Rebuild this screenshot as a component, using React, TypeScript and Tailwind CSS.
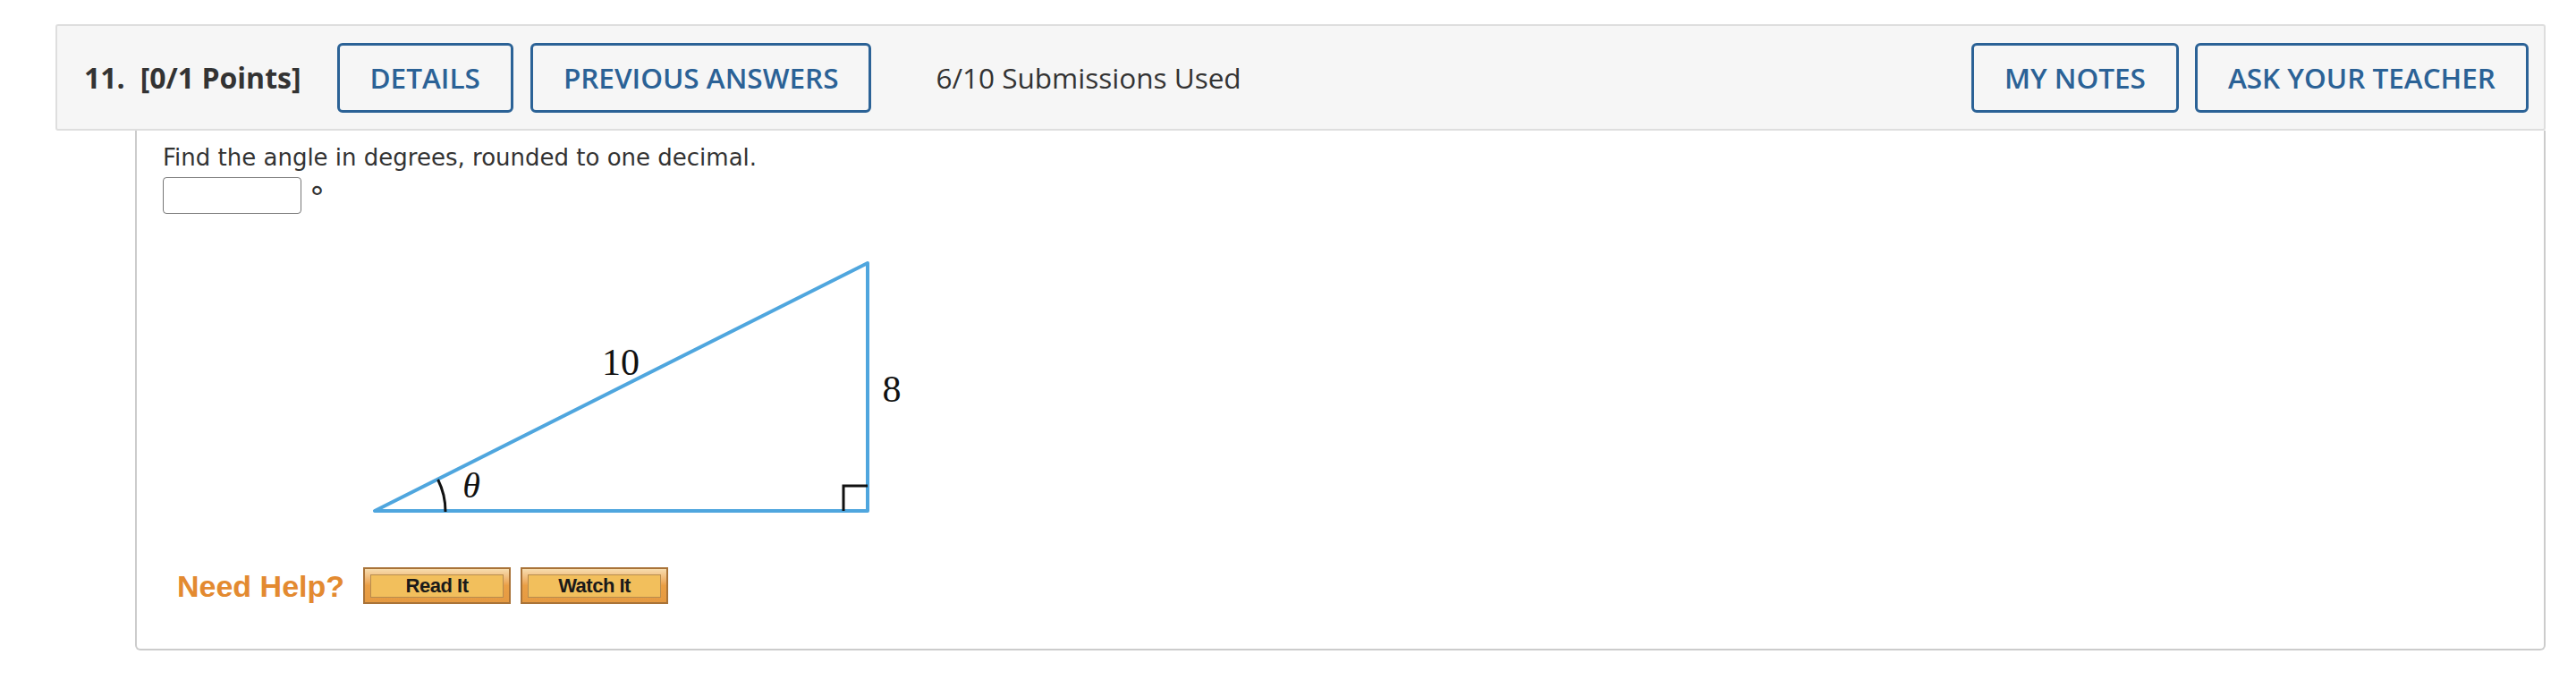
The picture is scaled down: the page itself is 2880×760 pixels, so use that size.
import React from "react";

const OPEN = { fontFamily: '"Open Sans", "Liberation Sans", sans-serif' };

function HeaderButton({ label }: { label: string }) {
  return (
    <div
      className="flex h-[78px] items-center rounded-[6px] border-[3px] border-[#2b6296] px-[34px] text-[31.5px] font-semibold leading-none text-[#2b6296]"
      style={OPEN}
    >
      {label}
    </div>
  );
}

function HelpButton({ label }: { label: string }) {
  return (
    <div className="h-[41px] w-[165px] border-2 border-[#a97338] bg-gradient-to-b from-[#f7dcae] via-[#ea9f45] to-[#e59a42] px-[6px] pt-[6px] pb-[5px]">
      <div
        className="flex h-full items-center justify-center border border-[#b78c4f] bg-[#f2bf5c] text-[22px] font-bold leading-none tracking-[-0.5px] text-[#1a1a1a]"
        style={{ fontFamily: '"Liberation Sans", Arial, sans-serif' }}
      >
        {label}
      </div>
    </div>
  );
}

export default function App() {
  return (
    <div className="min-h-[760px] w-[2880px] bg-white pt-[27px]">
      <div className="ml-[62px] w-[2784px]">
        <div
          className="flex h-[119px] items-center rounded-[3px] border-2 border-[#dedede] bg-[#f6f6f6] pl-[30px] pr-[17px] text-[#333333]"
          style={OPEN}
        >
          <span className="text-[32px] font-bold leading-none">11.</span>
          <span className="ml-[17px] text-[32px] font-bold leading-none">[0/1 Points]</span>
          <div className="ml-[40px] flex gap-[19px]">
            <HeaderButton label="DETAILS" />
            <HeaderButton label="PREVIOUS ANSWERS" />
          </div>
          <span className="ml-[72px] text-[31.5px] leading-none">6/10 Submissions Used</span>
          <div className="ml-auto flex gap-[18px]">
            <HeaderButton label="MY NOTES" />
            <HeaderButton label="ASK YOUR TEACHER" />
          </div>
        </div>

        <div
          className="ml-[89px] h-[581px] rounded-b-[6px] border-2 border-t-0 border-[#cccccc] pl-[29px] pt-[12px] text-[#333333]"
          style={{ fontFamily: '"DejaVu Sans", Verdana, sans-serif' }}
        >
          <div className="text-[26px] leading-[36px]">Find the angle in degrees, rounded to one decimal.</div>
          <div className="mt-[4px] flex items-start">
            <div className="h-[41px] w-[155px] rounded-[4px] border-[1.5px] border-[#777777] bg-white" />
            <span className="ml-[9px] mt-[6px] text-[34px] leading-none">°</span>
          </div>

          <svg
            className="ml-[218px] mt-[41px] block"
            width="640"
            height="312"
            viewBox="0 0 640 312"
          >
            <path
              d="M19 291 L570 291 L570 14 Z"
              fill="none"
              stroke="#4fa6de"
              strokeWidth="4"
              strokeLinejoin="round"
            />
            <path d="M98 292 A 79 79 0 0 0 89.6 256" fill="none" stroke="#111" strokeWidth="3" />
            <path d="M543 291 L543 263 L570 263" fill="none" stroke="#111" strokeWidth="3" />
            <text
              x="294"
              y="139"
              textAnchor="middle"
              fontSize="42"
              fill="#111"
              style={{ fontFamily: '"Liberation Serif", "Times New Roman", serif' }}
            >
              10
            </text>
            <text
              x="597"
              y="169"
              textAnchor="middle"
              fontSize="42"
              fill="#111"
              style={{ fontFamily: '"Liberation Serif", "Times New Roman", serif' }}
            >
              8
            </text>
            <text
              x="127"
              y="276"
              textAnchor="middle"
              fontSize="40"
              fontStyle="italic"
              fill="#111"
              style={{ fontFamily: '"Liberation Serif", "Times New Roman", serif' }}
            >
              θ
            </text>
          </svg>

          <div className="ml-[16px] mt-[42px] flex items-center">
            <span
              className="text-[34px] font-bold leading-none text-[#e38a30]"
              style={{ fontFamily: '"Liberation Sans", Arial, sans-serif' }}
            >
              Need Help?
            </span>
            <div className="ml-[21px] flex gap-[11px]">
              <HelpButton label="Read It" />
              <HelpButton label="Watch It" />
            </div>
          </div>
        </div>
      </div>
    </div>
  );
}
